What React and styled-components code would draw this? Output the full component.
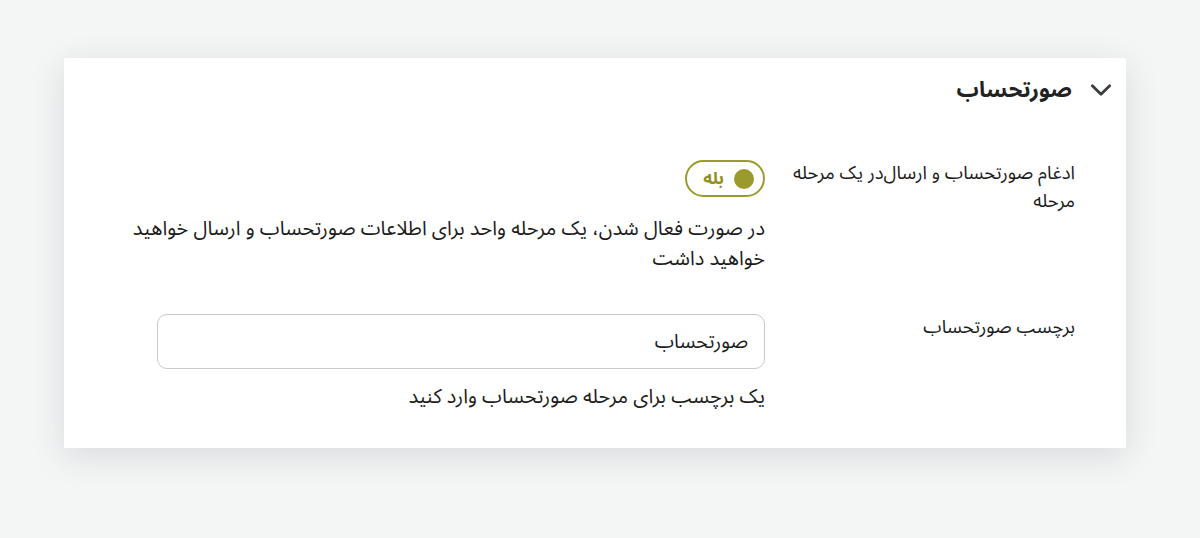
import React from "react";
import styled, { createGlobalStyle } from "styled-components";

const Global = createGlobalStyle`
  html, body { margin: 0; padding: 0; }
  body {
    background: #f4f5f5;
    font-family: "Noto Sans Arabic", "DejaVu Sans", sans-serif;
    color: #1c1c1c;
  }
`;

const Page = styled.div`
  width: 1200px;
  height: 538px;
  padding: 58px 74px 0 64px;
  box-sizing: border-box;
`;

const Card = styled.section`
  background: #ffffff;
  box-shadow: 0 8px 32px rgba(40, 50, 60, 0.13);
  padding: 14px 12px 28px 41px;
  direction: rtl;
  box-sizing: border-box;
  height: 390px;
`;

const Header = styled.div`
  display: flex;
  align-items: center;
  gap: 16px;
  height: 36px;
`;

const Title = styled.h2`
  margin: 0;
  font-size: 22px;
  font-weight: 700;
  color: #222;
`;

const Body = styled.div`
  display: grid;
  grid-template-columns: 295px 660px;
  column-gap: 15px;
  row-gap: 40px;
  padding-right: 39px;
  margin-top: 52px;
`;

const Label = styled.div`
  font-size: 18.5px;
  line-height: 28px;
  color: #1c1c1c;
`;

const Control = styled.div`
  display: flex;
  flex-direction: column;
  align-items: flex-start;
`;

const Toggle = styled.button`
  display: inline-flex;
  align-items: center;
  justify-content: flex-end;
  gap: 10px;
  height: 37px;
  width: 80px;
  padding: 0 9px 0 0;
  box-sizing: border-box;
  border: 2px solid #9a9b2c;
  border-radius: 20px;
  background: #fff;
  color: #8f9120;
  font-family: inherit;
  font-size: 17px;
  font-weight: 700;
  direction: ltr;
`;

const Dot = styled.span`
  width: 20px;
  height: 20px;
  border-radius: 50%;
  background: #9a9b2c;
`;

const Hint = styled.p`
  margin: ${(p) => p.$top}px 0 0;
  font-size: 20px;
  line-height: 30px;
  color: #1c1c1c;
`;

const Input = styled.input`
  width: 608px;
  height: 55px;
  box-sizing: border-box;
  border: 1px solid #c9c9c9;
  border-radius: 10px;
  padding: 0 16px;
  font-family: inherit;
  font-size: 19.5px;
  color: #1c1c1c;
  direction: rtl;
  outline: none;
`;

function Chevron() {
  return (
    <svg width="26" height="26" viewBox="0 0 24 24" fill="none" stroke="#3a3f44" strokeWidth="2.6" strokeLinecap="round" strokeLinejoin="round">
      <path d="M4 8l8 8 8-8" />
    </svg>
  );
}

export default function App() {
  return (
    <>
      <Global />
      <Page>
        <Card>
          <Header>
            <Chevron />
            <Title>صورتحساب</Title>
          </Header>
          <Body>
            <Label>ادغام صورتحساب و ارسال‌در یک مرحله مرحله</Label>
            <Control>
              <Toggle type="button">
                بله
                <Dot />
              </Toggle>
              <Hint $top={17}>در صورت فعال شدن، یک مرحله واحد برای اطلاعات صورتحساب و ارسال خواهید خواهید داشت</Hint>
            </Control>
            <Label>برچسب صورتحساب</Label>
            <Control>
              <Input defaultValue="صورتحساب" />
              <Hint $top={13}>یک برچسب برای مرحله صورتحساب وارد کنید</Hint>
            </Control>
          </Body>
        </Card>
      </Page>
    </>
  );
}
